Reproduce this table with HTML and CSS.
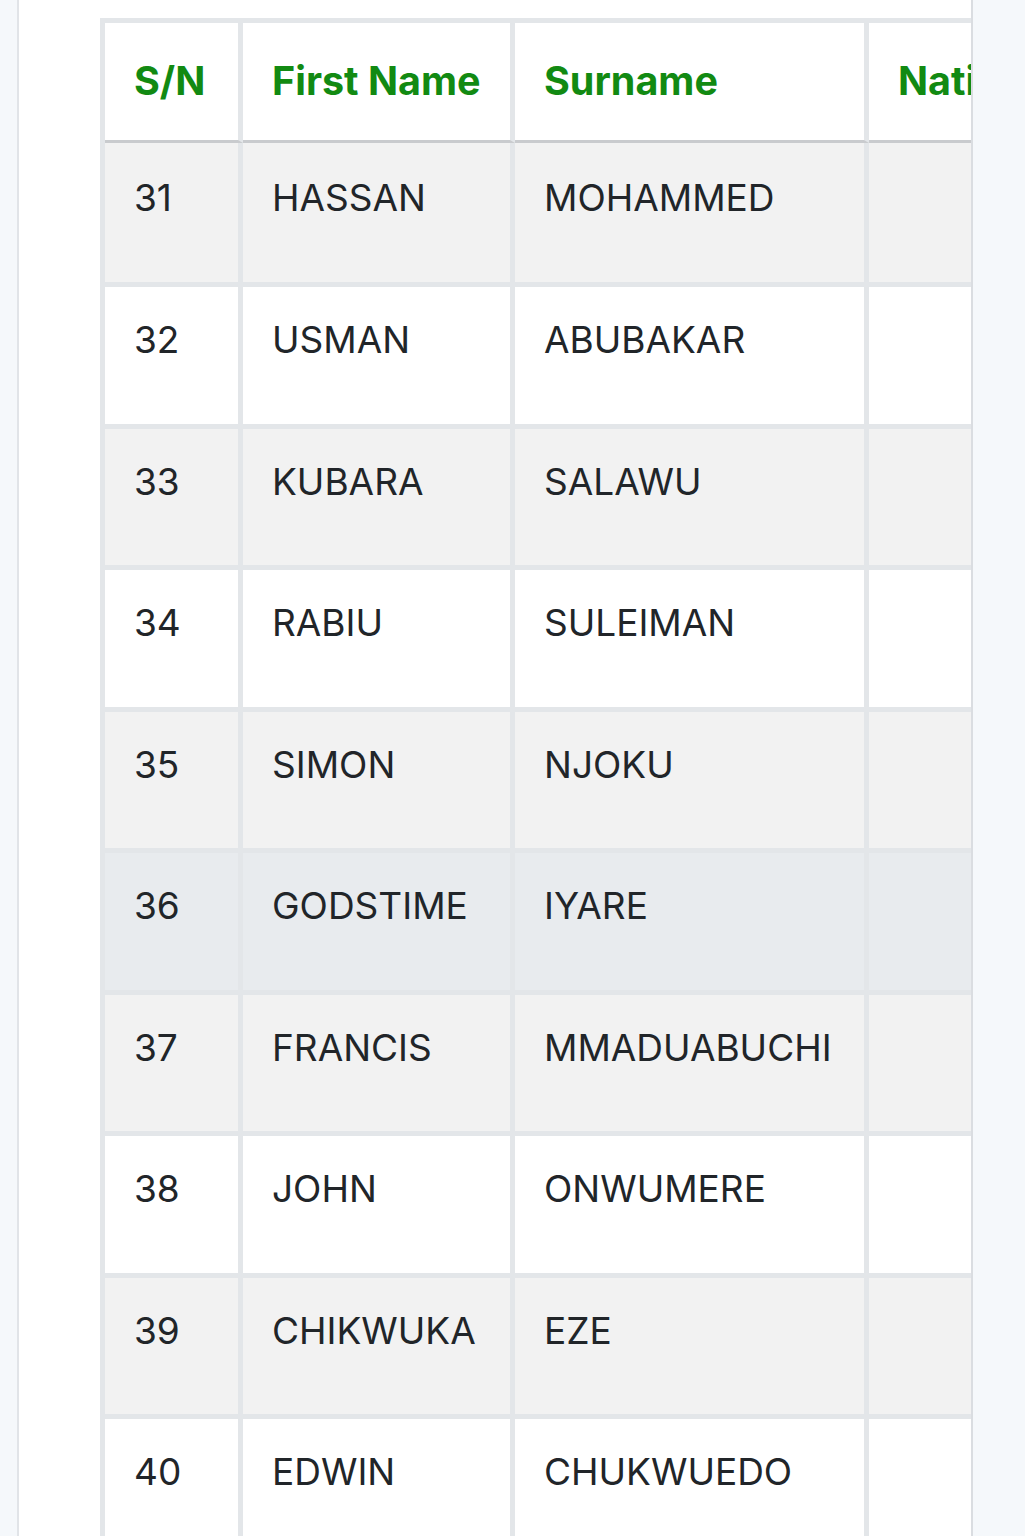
FILE: index.html
```html
<!DOCTYPE html>
<html lang="en">
<head>
<meta charset="utf-8">
<title>Staff list</title>
<link rel="stylesheet" href="styles.css">
</head>
<body>
<div class="page">
  <div class="card">
    <table class="grid">
      <thead>
        <tr>
          <th class="c-sn">S/N</th>
          <th class="c-first">First Name</th>
          <th class="c-sur">Surname</th>
          <th class="c-nat">Nationality</th>
        </tr>
      </thead>
      <tbody>
        <tr class="odd first"><td>31</td><td>HASSAN</td><td>MOHAMMED</td><td></td></tr>
        <tr><td>32</td><td>USMAN</td><td>ABUBAKAR</td><td></td></tr>
        <tr class="odd"><td>33</td><td>KUBARA</td><td>SALAWU</td><td></td></tr>
        <tr><td>34</td><td>RABIU</td><td>SULEIMAN</td><td></td></tr>
        <tr class="odd"><td>35</td><td>SIMON</td><td>NJOKU</td><td></td></tr>
        <tr class="hover"><td>36</td><td>GODSTIME</td><td>IYARE</td><td></td></tr>
        <tr class="odd"><td>37</td><td>FRANCIS</td><td>MMADUABUCHI</td><td></td></tr>
        <tr><td>38</td><td>JOHN</td><td>ONWUMERE</td><td></td></tr>
        <tr class="odd"><td>39</td><td>CHIKWUKA</td><td>EZE</td><td></td></tr>
        <tr><td>40</td><td>EDWIN</td><td>CHUKWUEDO</td><td></td></tr>
      </tbody>
    </table>
  </div>
</div>
</body>
</html>
```
FILE: styles.css
```css
html, body {
  margin: 0;
  padding: 0;
  background: #f5f8fb;
  font-family: Inter, "Noto Sans", sans-serif;
}
.page {
  padding-left: 17px;
  width: 956px;
  height: 1536px;
  overflow: hidden;
}
.card {
  background: #ffffff;
  border-left: 2px solid #e1e4e8;
  border-right: 2px solid #dadde1;
  height: 100%;
  overflow: hidden;
  padding: 18px 0 0 81px;
  box-sizing: border-box;
}
.grid {
  border-collapse: separate;
  border-spacing: 0;
  border-top: 5px solid #e3e6e9;
  border-left: 5px solid #e3e6e9;
  table-layout: fixed;
  width: 1200px;
}
.grid th, .grid td {
  border-right: 5px solid #e3e6e9;
  padding: 0 28px 0 29px;
  text-align: left;
  white-space: nowrap;
  box-sizing: border-box;
}
.grid th {
  height: 120px;
  border-bottom: 3px solid #c9cbce;
  color: #128a12;
  font-weight: 700;
  font-size: 39.5px;
  vertical-align: middle;
  padding-bottom: 2px;
  background: #ffffff;
}
.c-sn { width: 138px; }
.c-first { width: 272px; }
.c-sur { width: 354px; }
.c-nat { width: 436px; }
.grid td {
  height: 141.5px;
  border-bottom: 5px solid #e3e6e9;
  color: #212529;
  font-size: 37px;
  vertical-align: top;
  padding-top: 31px;
  line-height: 1.2;
  background: #ffffff;
}
.grid tr.first td { height: 144px; padding-top: 33px; }
.grid tr.odd td { background: #f2f2f2; }
.grid tr.hover td { background: #e8ebee; }
```
